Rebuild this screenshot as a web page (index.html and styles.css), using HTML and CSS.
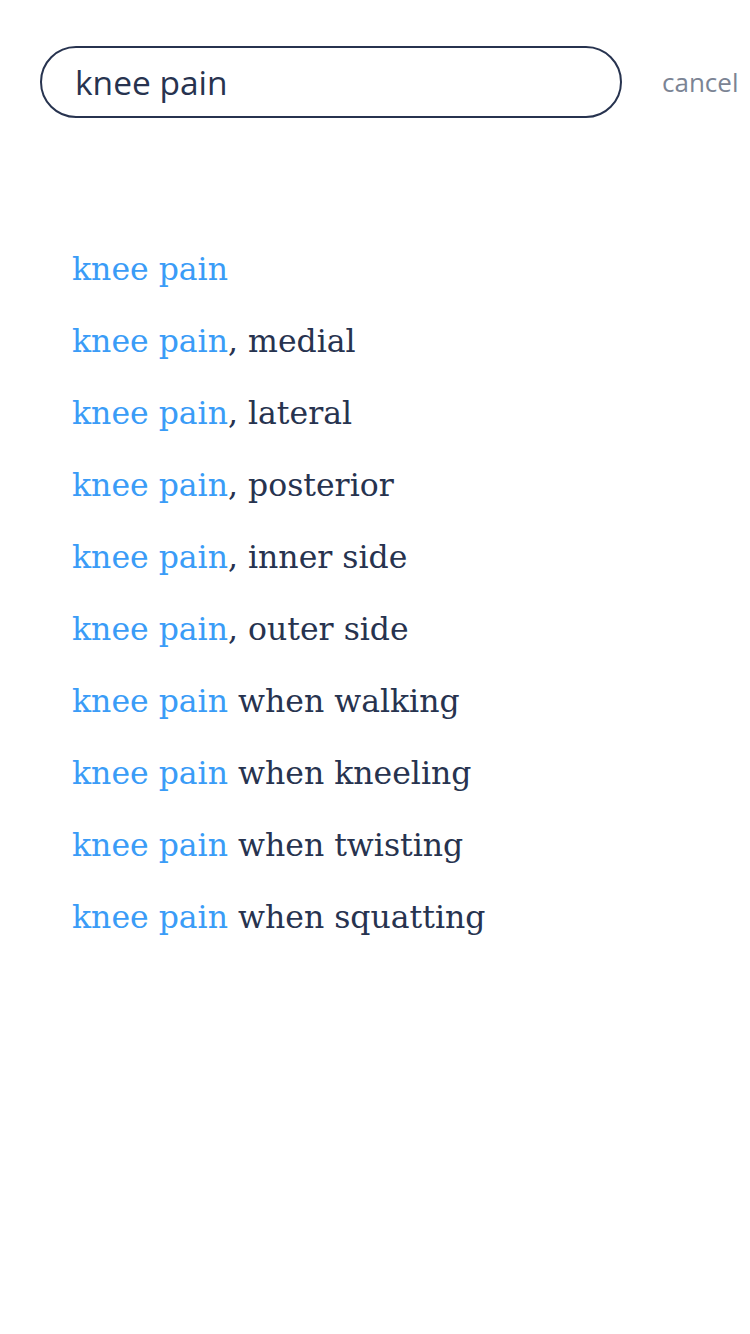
FILE: index.html
```html
<!DOCTYPE html>
<html>
<head>
<meta charset="utf-8">
<link rel="stylesheet" href="styles.css">
</head>
<body>
<div class="top">
  <div class="search"><span class="query">knee pain</span></div>
  <span class="cancel">cancel</span>
</div>
<ul class="results">
  <li><span class="hl">knee pain</span></li>
  <li><span class="hl">knee pain</span>, medial</li>
  <li><span class="hl">knee pain</span>, lateral</li>
  <li><span class="hl">knee pain</span>, posterior</li>
  <li><span class="hl">knee pain</span>, inner side</li>
  <li><span class="hl">knee pain</span>, outer side</li>
  <li><span class="hl">knee pain</span> when walking</li>
  <li><span class="hl">knee pain</span> when kneeling</li>
  <li><span class="hl">knee pain</span> when twisting</li>
  <li><span class="hl">knee pain</span> when squatting</li>
</ul>
</body>
</html>
```
FILE: styles.css
```css
html, body { margin: 0; padding: 0; background: #fff; }
body { width: 750px; height: 1334px; overflow: hidden; }
.top {
  display: flex;
  align-items: center;
  padding: 46px 0 0 40px;
}
.search {
  box-sizing: border-box;
  width: 582px;
  height: 72px;
  border: 2px solid #27334f;
  border-radius: 36px;
  display: flex;
  align-items: center;
  padding-left: 33px;
}
.query {
  font-family: "Open Sans", sans-serif;
  font-size: 33.5px;
  color: #27334f;
}
.cancel {
  margin-left: 40px;
  font-family: "Open Sans", sans-serif;
  font-size: 26px;
  color: #7b8494;
}
.results {
  list-style: none;
  margin: 0;
  padding: 115px 0 0 72px;
}
.results li {
  height: 72px;
  line-height: 72px;
  font-family: "DejaVu Serif", serif;
  font-size: 31.5px;
  color: #27334f;
  white-space: nowrap;
}
.hl { color: #3a9cf7; }
```
